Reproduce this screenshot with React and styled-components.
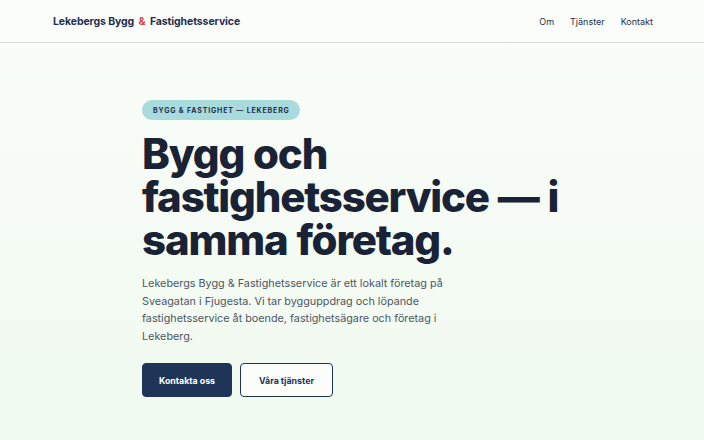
import React from "react";
import styled, { createGlobalStyle } from "styled-components";

const GlobalStyle = createGlobalStyle`
  html, body { margin: 0; padding: 0; }
  body {
    font-family: Inter, "Noto Sans", sans-serif;
    color: #1b2436;
    background: #f1faf1;
  }
  * { box-sizing: border-box; }
`;

const Page = styled.div`
  min-height: 440px;
  display: flex;
  flex-direction: column;
  background: linear-gradient(180deg, #fbfdfb 0%, #f7fcf6 30%, #f0faf0 100%);
`;

const Header = styled.header`
  height: 43px;
  border-bottom: 1px solid #d5dcd8;
  background: #fbfdfb;
  display: flex;
  align-items: center;
  justify-content: space-between;
  padding: 0 51px 0 53px;
`;

const Logo = styled.div`
  font-size: 10.5px;
  font-weight: 700;
  color: #1f2d4b;
  letter-spacing: -0.1px;
`;

const Amp = styled.span`
  color: #d64545;
  margin: 0 2px;
`;

const Nav = styled.nav`
  display: flex;
  gap: 16px;
`;

const NavLink = styled.a`
  font-size: 9px;
  color: #1f2d4b;
  text-decoration: none;
`;

const Hero = styled.main`
  flex: 1;
  padding: 57px 0 0 142px;
  display: flex;
  flex-direction: column;
  align-items: flex-start;
`;

const Pill = styled.span`
  display: inline-block;
  background: #a9dadc;
  color: #1d3050;
  font-size: 7px;
  font-weight: 700;
  letter-spacing: 0.85px;
  padding: 6px 10px 5px 11px;
  border-radius: 999px;
  text-transform: uppercase;
`;

const Title = styled.h1`
  margin: 12px 0 0;
  font-size: 42px;
  line-height: 43px;
  font-weight: 800;
  letter-spacing: -1.2px;
  word-spacing: 1px;
  color: #1a2335;
  max-width: 440px;
`;

const Lead = styled.p`
  margin: 14px 0 0;
  font-size: 10.8px;
  line-height: 17.6px;
  color: #4d5563;
  max-width: 320px;
`;

const Actions = styled.div`
  display: flex;
  gap: 8px;
  margin-top: 18px;
`;

const Button = styled.a`
  display: inline-flex;
  align-items: center;
  justify-content: center;
  height: 34px;
  padding: 0 ${(p) => (p.$outline ? "18px" : "16px")};
  font-size: 8.8px;
  font-weight: 700;
  border-radius: 4px;
  text-decoration: none;
  color: ${(p) => (p.$outline ? "#1e3558" : "#ffffff")};
  background: ${(p) => (p.$outline ? "#fbfdfb" : "#1e3558")};
  border: 1px solid #1e3558;
`;

export default function App() {
  return (
    <>
      <GlobalStyle />
      <Page>
        <Header>
          <Logo>
            Lekebergs Bygg<Amp> &amp; </Amp>Fastighetsservice
          </Logo>
          <Nav>
            <NavLink href="#om">Om</NavLink>
            <NavLink href="#tjanster">Tjänster</NavLink>
            <NavLink href="#kontakt">Kontakt</NavLink>
          </Nav>
        </Header>
        <Hero>
          <Pill>Bygg &amp; fastighet — Lekeberg</Pill>
          <Title>Bygg och fastighetsservice — i samma företag.</Title>
          <Lead>
            Lekebergs Bygg &amp; Fastighetsservice är ett lokalt företag på
            Sveagatan i Fjugesta. Vi tar bygguppdrag och löpande
            fastighetsservice åt boende, fastighetsägare och företag i
            Lekeberg.
          </Lead>
          <Actions>
            <Button href="#kontakt">Kontakta oss</Button>
            <Button href="#tjanster" $outline>
              Våra tjänster
            </Button>
          </Actions>
        </Hero>
      </Page>
    </>
  );
}
